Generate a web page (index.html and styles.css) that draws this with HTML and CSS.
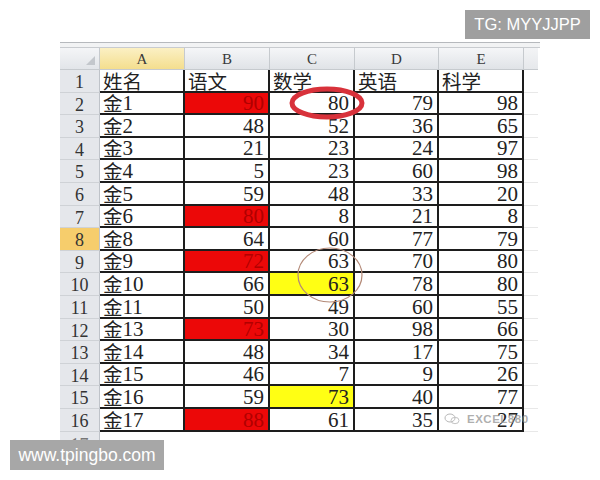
FILE: index.html
```html
<!DOCTYPE html>
<html lang="zh">
<head>
<meta charset="utf-8">
<title>成绩表</title>
<link rel="stylesheet" href="styles.css">
</head>
<body>
<div class="page">
  <div class="topbar"></div>
  <div class="sheet">
    <div class="corner"><span class="tri"></span></div>
    <div class="ch sel">A</div><div class="ch">B</div><div class="ch">C</div><div class="ch">D</div><div class="ch">E</div><div class="ch xh"></div>

    <div class="rh">1</div><div class="c t">姓名</div><div class="c t">语文</div><div class="c t">数学</div><div class="c t">英语</div><div class="c t">科学</div><div class="x"></div>
    <div class="rh">2</div><div class="c t">金<span class="n">1</span></div><div class="c red">90</div><div class="c">80</div><div class="c">79</div><div class="c">98</div><div class="x"></div>
    <div class="rh">3</div><div class="c t">金<span class="n">2</span></div><div class="c">48</div><div class="c">52</div><div class="c">36</div><div class="c">65</div><div class="x"></div>
    <div class="rh">4</div><div class="c t">金<span class="n">3</span></div><div class="c">21</div><div class="c">23</div><div class="c">24</div><div class="c">97</div><div class="x"></div>
    <div class="rh">5</div><div class="c t">金<span class="n">4</span></div><div class="c">5</div><div class="c">23</div><div class="c">60</div><div class="c">98</div><div class="x"></div>
    <div class="rh">6</div><div class="c t">金<span class="n">5</span></div><div class="c">59</div><div class="c">48</div><div class="c">33</div><div class="c">20</div><div class="x"></div>
    <div class="rh">7</div><div class="c t">金<span class="n">6</span></div><div class="c red">80</div><div class="c">8</div><div class="c">21</div><div class="c">8</div><div class="x"></div>
    <div class="rh sel">8</div><div class="c t">金<span class="n">8</span></div><div class="c">64</div><div class="c">60</div><div class="c">77</div><div class="c">79</div><div class="x"></div>
    <div class="rh">9</div><div class="c t">金<span class="n">9</span></div><div class="c red">72</div><div class="c">63</div><div class="c">70</div><div class="c">80</div><div class="x"></div>
    <div class="rh">10</div><div class="c t">金<span class="n">10</span></div><div class="c">66</div><div class="c yel">63</div><div class="c">78</div><div class="c">80</div><div class="x"></div>
    <div class="rh">11</div><div class="c t">金<span class="n">11</span></div><div class="c">50</div><div class="c">49</div><div class="c">60</div><div class="c">55</div><div class="x"></div>
    <div class="rh">12</div><div class="c t">金<span class="n">13</span></div><div class="c red">73</div><div class="c">30</div><div class="c">98</div><div class="c">66</div><div class="x"></div>
    <div class="rh">13</div><div class="c t">金<span class="n">14</span></div><div class="c">48</div><div class="c">34</div><div class="c">17</div><div class="c">75</div><div class="x"></div>
    <div class="rh">14</div><div class="c t">金<span class="n">15</span></div><div class="c">46</div><div class="c">7</div><div class="c">9</div><div class="c">26</div><div class="x"></div>
    <div class="rh">15</div><div class="c t">金<span class="n">16</span></div><div class="c">59</div><div class="c yel">73</div><div class="c">40</div><div class="c">77</div><div class="x"></div>
    <div class="rh">16</div><div class="c t">金<span class="n">17</span></div><div class="c red">88</div><div class="c">61</div><div class="c">35</div><div class="c">27</div><div class="x"></div>
    <div class="rh last">17</div><div class="e"></div><div class="e"></div><div class="e"></div><div class="e"></div><div class="e"></div><div class="e"></div>
  </div>
</div>

<svg class="marks" width="600" height="480" viewBox="0 0 600 480" aria-hidden="true">
  <ellipse cx="327" cy="103" rx="35" ry="14" fill="none" stroke="#d8323b" stroke-width="5"/>
  <ellipse cx="330" cy="275" rx="32" ry="27" fill="none" stroke="#b48a78" stroke-width="1.2"/>
</svg>

<div class="wm">
  <svg class="wm-icon" width="16" height="12" viewBox="0 0 16 12" aria-hidden="true">
    <ellipse cx="6" cy="5" rx="5" ry="4" fill="none" stroke="#b7b7b7" stroke-width="1"/>
    <ellipse cx="11" cy="7.5" rx="4" ry="3.2" fill="none" stroke="#c4c4c4" stroke-width="1"/>
  </svg>
  <span>EXCEL880</span>
</div>

<div class="tag">TG: MYYJJPP</div>
<div class="site">www.tpingbo.com</div>
</body>
</html>
```

FILE: styles.css
```css
* { box-sizing: border-box; }

body {
  margin: 0;
  width: 600px;
  height: 480px;
  overflow: hidden;
  position: relative;
  background: #ffffff;
  font-family: "Liberation Serif", "Noto Sans CJK SC", serif;
  color: #222;
}

.page {
  padding: 42px 0 0 60px;
}

.topbar {
  width: 480px;
  height: 6px;
  border-top: 1px solid #b6b9bd;
  border-bottom: 1px solid #c8cbcf;
  background: #f2f3f4;
}

.sheet {
  display: grid;
  grid-template-columns: 40px 85px 85px 85px 84px 85px 14px;
  grid-template-rows: 22px repeat(16, 22.6px) 9px;
  width: 478px;
}

.corner {
  background: linear-gradient(#f4f5f7, #e2e5e9);
  border-right: 1px solid #c6cace;
  border-bottom: 1px solid #c6cace;
  position: relative;
}

.tri {
  position: absolute;
  right: 4px;
  bottom: 4px;
  width: 0;
  height: 0;
  border-left: 9px solid transparent;
  border-bottom: 9px solid #c3c7cc;
}

.ch {
  background: linear-gradient(#f5f6f8, #e0e3e7);
  border-right: 1px solid #c6cace;
  border-bottom: 1px solid #c6cace;
  text-align: center;
  font-size: 15px;
  line-height: 22px;
  color: #3a3a3a;
}

.ch.sel {
  background: linear-gradient(#fbf0c4, #f4de8e);
}

.ch.xh {
  border-right: none;
  background: linear-gradient(#f3f4f6, #e6e8eb);
}

.rh {
  background: #e5e7eb;
  border-right: 1px solid #bfc3c9;
  border-bottom: 1px solid #cfd2d6;
  text-align: center;
  font-size: 18px;
  line-height: 24px;
  color: #333;
}

.rh.sel {
  background: #f6cd6c;
}

.rh.last {
  border-bottom: none;
  line-height: 26px;
  color: #777;
  overflow: hidden;
}

.c {
  background: #fff;
  border-right: 2px solid #1d1d1d;
  border-bottom: 2px solid #1d1d1d;
  display: flex;
  align-items: flex-end;
  justify-content: flex-end;
  padding: 0 4px 0 0;
  font-size: 21px;
  line-height: 20px;
}

.c.t {
  justify-content: flex-start;
  padding: 0 0 0 3px;
  font-family: "Noto Sans CJK SC", sans-serif;
  font-size: 19.5px;
  line-height: 20px;
}

.c.t .n {
  font-family: "Liberation Serif", serif;
  font-size: 21px;
}

.c.red {
  background: #ec0808;
  color: #b10000;
}

.c.yel {
  background: #ffff14;
}

.x {
  background: #fff;
  border-bottom: 1px solid #e8e8e8;
}

.e {
  background: #fff;
}

.marks {
  position: absolute;
  left: 0;
  top: 0;
  pointer-events: none;
}

.wm {
  position: absolute;
  left: 444px;
  top: 413px;
  display: flex;
  align-items: center;
  gap: 7px;
  font-family: "Liberation Sans", Arial, sans-serif;
  font-size: 11.5px;
  font-weight: bold;
  letter-spacing: 0.5px;
  color: rgba(140, 140, 140, 0.7);
}

.tag {
  position: absolute;
  left: 465px;
  top: 10px;
  width: 125px;
  height: 29px;
  background: #9f9f9f;
  color: #fff;
  font-family: "Liberation Sans", Arial, sans-serif;
  font-size: 16.5px;
  line-height: 29px;
  text-align: center;
}

.site {
  position: absolute;
  left: 10px;
  top: 440px;
  width: 154px;
  height: 30px;
  background: #a7a7a7;
  color: #fff;
  font-family: "Liberation Sans", Arial, sans-serif;
  font-size: 17.5px;
  line-height: 30px;
  text-align: center;
}
```
